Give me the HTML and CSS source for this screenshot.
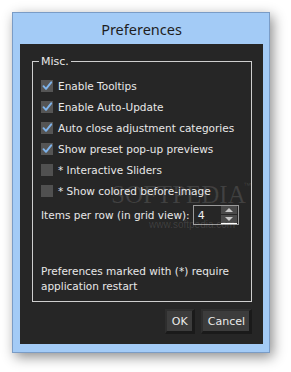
FILE: index.html
```html
<!DOCTYPE html>
<html>
<head>
<meta charset="utf-8">
<link rel="stylesheet" href="styles.css">
</head>
<body>
<div class="window">
  <div class="titlebar">Preferences</div>
  <div class="client">
    <fieldset class="group">
      <legend class="legend">Misc.</legend>
      <div class="row"><span class="cb checked"><svg viewBox="0 0 12 12" width="12" height="12"><path d="M2.5 6.2 L5 8.8 L10.2 2.3" fill="none" stroke="#7fb4ec" stroke-width="1.9" stroke-linecap="round" stroke-linejoin="round"/></svg></span><span>Enable Tooltips</span></div>
      <div class="row"><span class="cb checked"><svg viewBox="0 0 12 12" width="12" height="12"><path d="M2.5 6.2 L5 8.8 L10.2 2.3" fill="none" stroke="#7fb4ec" stroke-width="1.9" stroke-linecap="round" stroke-linejoin="round"/></svg></span><span>Enable Auto-Update</span></div>
      <div class="row"><span class="cb checked"><svg viewBox="0 0 12 12" width="12" height="12"><path d="M2.5 6.2 L5 8.8 L10.2 2.3" fill="none" stroke="#7fb4ec" stroke-width="1.9" stroke-linecap="round" stroke-linejoin="round"/></svg></span><span>Auto close adjustment categories</span></div>
      <div class="row"><span class="cb checked"><svg viewBox="0 0 12 12" width="12" height="12"><path d="M2.5 6.2 L5 8.8 L10.2 2.3" fill="none" stroke="#7fb4ec" stroke-width="1.9" stroke-linecap="round" stroke-linejoin="round"/></svg></span><span>Show preset pop-up previews</span></div>
      <div class="row"><span class="cb"></span><span>* Interactive Sliders</span></div>
      <div class="row"><span class="cb"></span><span>* Show colored before-image</span></div>
      <div class="items">
        <span>Items per row (in grid view):</span>
        <div class="spin">
          <span class="spinval">4</span>
          <div class="spinbtns">
            <span class="sbtn"><svg viewBox="0 0 10 6" width="10" height="6"><path d="M1 5 L5 1 L9 5 Z" fill="#c8c8c8"/></svg></span>
            <span class="sbtn"><svg viewBox="0 0 10 6" width="10" height="6"><path d="M1 1 L5 5 L9 1 Z" fill="#c8c8c8"/></svg></span>
          </div>
        </div>
      </div>
      <p class="note">Preferences marked with (*) require application restart</p>
    </fieldset>
    <div class="buttons">
      <span class="btn">OK</span>
      <span class="btn">Cancel</span>
    </div>
  </div>
  <div class="watermark"><span class="wm-big">SOFTPEDIA</span><span class="wm-tm">™</span><span class="wm-small">www.softpedia.com</span></div>
</div>
</body>
</html>
```

FILE: styles.css
```css
html, body {
  margin: 0;
  padding: 0;
  background: #ffffff;
}
body {
  width: 291px;
  height: 372px;
  overflow: hidden;
}
.window {
  position: relative;
  margin: 12px 0 0 12px;
  border: 1px solid #7a9cc6;
  background: #a3cbf6;
  box-shadow: 3px 4px 12px rgba(0, 0, 0, 0.45);
  display: flex;
  flex-direction: column;
  padding: 0 6px 8px 7px;
  box-sizing: content-box;
  width: 243px;
  height: 331px;
}
.titlebar {
  height: 30px;
  display: flex;
  align-items: center;
  justify-content: center;
  font-family: "Noto Sans", "Open Sans", sans-serif;
  font-size: 14.5px;
  color: #1e1e1e;
  padding-top: 1px;
}
.client {
  flex: 1;
  background: #262626;
  display: flex;
  flex-direction: column;
  padding: 11px 11px 0 12px;
  font-family: "DejaVu Sans", sans-serif;
  font-size: 10.5px;
  color: #e8e8e8;
}
.group {
  margin: 0;
  border: 1px solid #cfcfcf;
  padding: 7px 8px 0 8px;
  height: 247px;
  box-sizing: border-box;
  min-width: 0;
}
.legend {
  padding: 0 2px;
  margin-left: -2px;
  font-size: 11px;
  line-height: 13px;
}
.row {
  height: 21px;
  display: flex;
  align-items: center;
  gap: 5px;
  white-space: nowrap;
}
.cb {
  width: 12px;
  height: 12px;
  background: #505050;
  display: flex;
  flex: none;
}
.cb.checked {
  background: #555555;
}
.items {
  display: flex;
  align-items: center;
  height: 22px;
  margin-top: 3px;
  white-space: nowrap;
}
.spin {
  margin-left: 3px;
  width: 44px;
  height: 18px;
  border: 1px solid #9a9a9a;
  display: flex;
  align-items: center;
  justify-content: space-between;
  font-size: 11px;
}
.spinval {
  padding-left: 4px;
  color: #f0f0f0;
}
.spinbtns {
  width: 16px;
  height: 18px;
  display: flex;
  flex-direction: column;
  border-bottom: 1px solid #ffffff;
  box-sizing: border-box;
  margin-right: 1px;
}
.sbtn {
  flex: 1;
  background: #4a4a4a;
  display: flex;
  align-items: center;
  justify-content: center;
}
.sbtn + .sbtn {
  border-top: 1px solid #262626;
}
.note {
  margin: 38px 0 0 0;
  line-height: 15px;
}
.buttons {
  display: flex;
  justify-content: flex-end;
  gap: 6px;
  margin-top: 7px;
}
.btn {
  height: 25px;
  box-sizing: border-box;
  display: flex;
  align-items: center;
  padding: 0 4px 0 5px;
  background: #3c3c3c;
  border-top: 2px solid #2e2e2e;
  border-left: 2px solid #2e2e2e;
  border-right: 3px solid #1a1a1a;
  border-bottom: 3px solid #1a1a1a;
  font-size: 11px;
  color: #eaeaea;
}
.watermark {
  position: absolute;
  left: 98px;
  top: 160px;
  width: 160px;
  height: 60px;
  color: rgba(255, 255, 255, 0.12);
  pointer-events: none;
}
.wm-big {
  position: absolute;
  left: 0;
  top: 8px;
  font-family: "Liberation Serif", serif;
  font-size: 25px;
}
.wm-tm {
  position: absolute;
  left: 132px;
  top: 8px;
  font-family: "Liberation Sans", sans-serif;
  font-size: 8px;
}
.wm-small {
  position: absolute;
  left: 38px;
  top: 46px;
  font-family: "Liberation Sans", sans-serif;
  font-size: 10px;
}
```
